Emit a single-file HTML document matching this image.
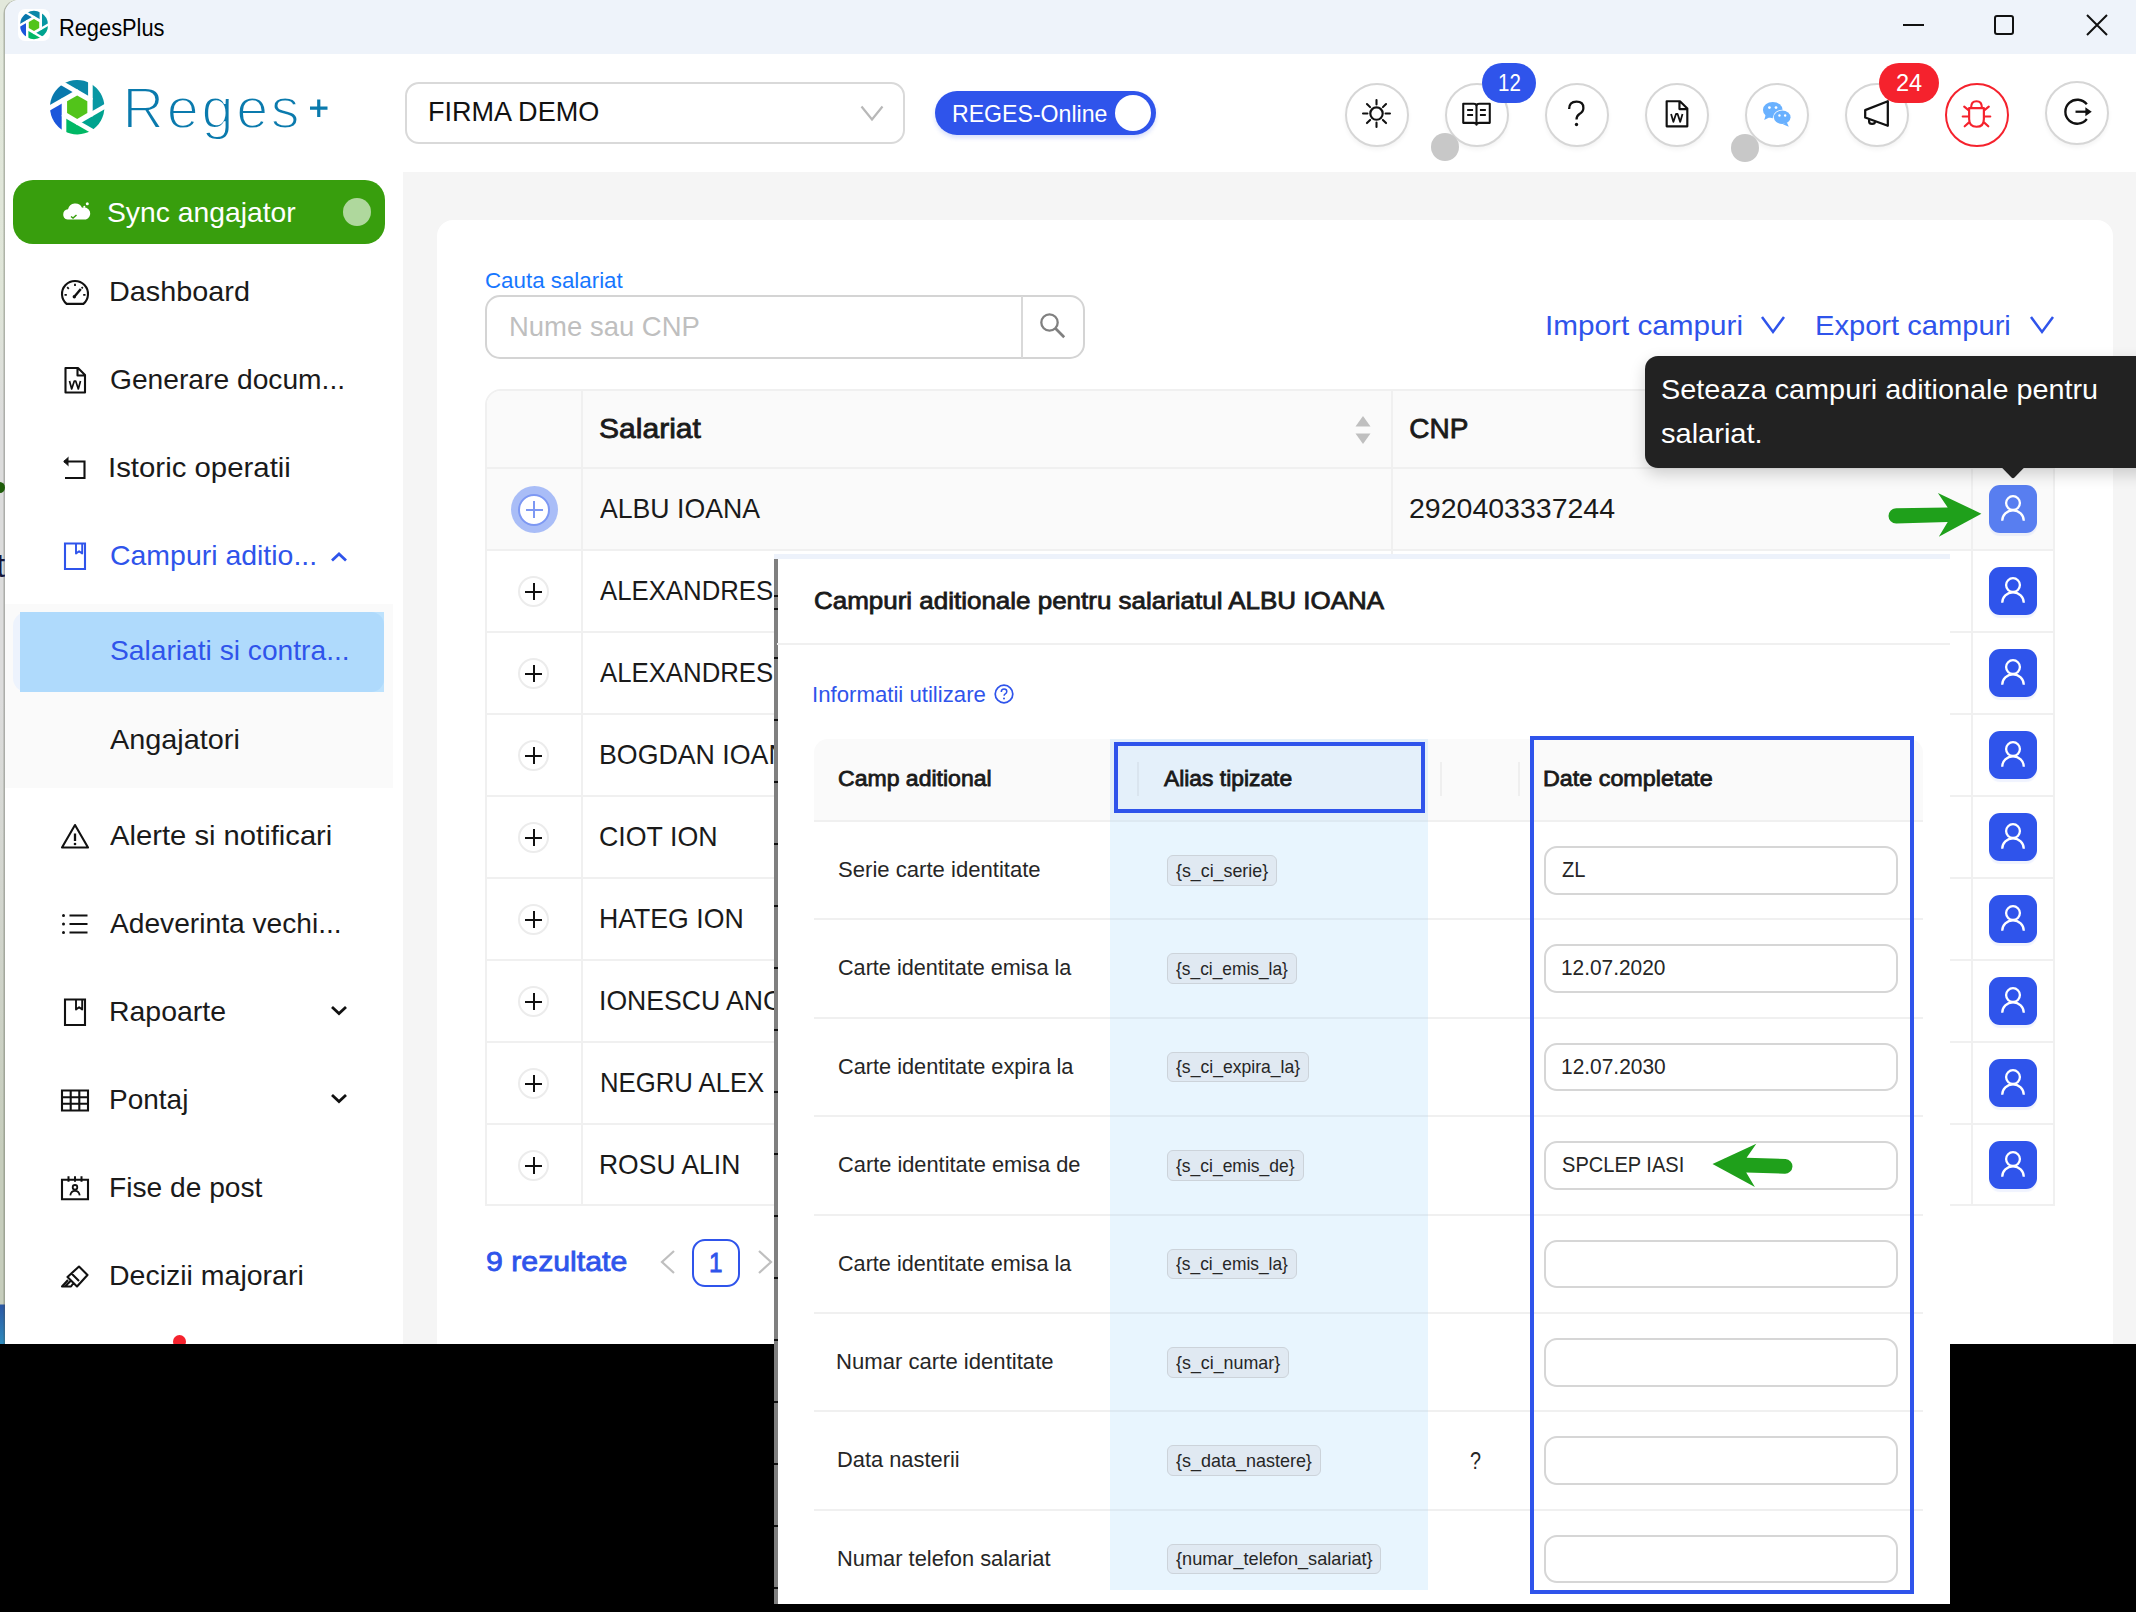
<!DOCTYPE html>
<html lang="ro">
<head>
<meta charset="utf-8">
<title>RegesPlus</title>
<style>
*{box-sizing:border-box;margin:0;padding:0}
html,body{width:2136px;height:1612px;overflow:hidden;background:#000;font-family:"Liberation Sans",sans-serif;}
.abs{position:absolute}
.t{position:absolute;white-space:nowrap;line-height:1;transform-origin:0 50%;font-family:"Liberation Sans",sans-serif}
#stage{position:absolute;left:0;top:0;width:2136px;height:1612px;overflow:hidden;background:#000}
/* desktop strip on the far left */
#strip{left:0;top:0;width:6px;height:1344px;background:linear-gradient(#e2e8db 0,#dfe5d8 300px,#dcdcdc 420px,#dcdcdc 700px,#c6cdbc 1150px,#c6cdbc 1304px,#2c58a5 1305px,#2d8bbd 1344px)}
/* app window */
#corner{left:0;top:0;width:30px;height:30px;background:#e2e8db}
#win{left:5px;top:0;width:2131px;height:1344px;background:#fff;border-top-left-radius:14px;overflow:hidden;box-shadow:-1.5px 0 0 0 rgba(70,75,65,.32)}
#titlebar{left:0;top:0;width:2131px;height:54px;background:#eef3fa}
#content{left:398px;top:172px;width:1733px;height:1172px;background:#f5f5f5}
#card{left:432px;top:220px;width:1676px;height:1200px;background:#fff;border-radius:16px}
#submenu{left:0;top:604px;width:388px;height:184px;background:#fafafa}
#selh{left:7.5px;top:612px;width:371.5px;height:80px;border-radius:14px;background:#edf3fd}
#selc{left:360px;top:612px;width:19px;height:80px;background:#bde2fd;border-radius:0}
#sel{left:15px;top:612px;width:364px;height:80px;background:#afdafc;border-radius:0 13px 13px 0}
#sync{left:8px;top:180px;width:372px;height:64px;border-radius:20px;background:#389e0d}
#syncdot{left:338px;top:198px;width:28px;height:28px;border-radius:50%;background:#afd89d}
.circ{position:absolute;width:64px;height:64px;border-radius:50%;border:2.2px solid #d6d6d6;background:#fff;box-shadow:0 3px 4px rgba(0,0,0,.045)}
.circ svg{position:absolute;left:0.3px;top:0.3px;width:59px;height:59px}
.badge{position:absolute;height:40px;border-radius:20px}
.gdot{position:absolute;width:28px;height:28px;border-radius:50%;background:#c8c8c8}
/* outer table */
#tbl{left:485px;top:389px;width:1570px;height:817px;border:2px solid #f0f0f0;border-radius:16px 16px 0 0;overflow:hidden;background:#fff}
#tbl .hr{position:absolute;left:0;width:1570px;height:2px;background:#f0f0f0}
#tbl .vr{position:absolute;top:0;width:2px;height:817px;background:#f0f0f0}
.exp{position:absolute;width:31px;height:31px;border-radius:50%;border:2px solid #ececec;background:#fff}
.exp:before{content:"";position:absolute;left:5px;top:12.5px;width:17px;height:2px;background:#111}
.exp:after{content:"";position:absolute;left:12.5px;top:5px;width:2px;height:17px;background:#111}
.pbtn{position:absolute;left:1989px;width:48px;height:48px;border-radius:11px;background:#2f54eb;box-shadow:0 3px 1px rgba(47,84,235,.07)}
.pbtn svg{position:absolute;left:0;top:0;width:48px;height:48px}
/* modal */
#modal{left:774px;top:554px;width:1176px;height:1050px;background:#fff;overflow:hidden}
#modal .in{position:absolute;left:-774px;top:-554px;width:2136px;height:1612px}
.inp{position:absolute;left:1544px;width:354px;height:48.5px;border:2px solid #d6d6d6;border-radius:13px;background:#fff}
.tag{position:absolute;left:1166.8px;height:30.5px;border:1.5px solid #ccd3da;border-radius:6px;background:#e0e9f2}
.mhr{position:absolute;left:814px;width:1109px;height:2px;background:#f0f0f0}
</style>
</head>
<body>
<div id="stage">
  <div id="strip" class="abs"></div>
  <div id="corner" class="abs"></div>
  <div id="win" class="abs">
    <div id="titlebar" class="abs"></div>
    <div id="content" class="abs"></div>
    <div id="card" class="abs"></div>
    <div id="submenu" class="abs"></div>
    <div id="selh" class="abs"></div>
    <div id="selc" class="abs"></div>
    <div id="sel" class="abs"></div>
    <div id="sync" class="abs"></div>
    <div id="syncdot" class="abs"></div>
  </div>
  <!-- everything below is positioned in absolute page coordinates -->
  <div id="base" class="abs" style="left:0;top:0;width:2136px;height:1344px;overflow:hidden">
<div class="abs" style="left:18px;top:9px;width:32px;height:32px;border-radius:7px;background:#fff"></div>
<svg class="abs" style="left:19.0px;top:9.8px;width:30.0px;height:30.0px" viewBox="-1.0714 -1.0714 2.1429 2.1429"><path d="M0.4850 -0.8745L0.4850 0.2800L0.9999 -0.0172A1 1 0 0 0 0.4850 -0.8745Z" fill="#0897a3"/><path d="M0.9999 -0.0172L0.0000 0.5600L0.5149 0.8573A1 1 0 0 0 0.9999 -0.0172Z" fill="#00a38f"/><path d="M0.5149 0.8573L-0.4850 0.2800L-0.4850 0.8745A1 1 0 0 0 0.5149 0.8573Z" fill="#00b865"/><path d="M-0.4850 0.8745L-0.4850 -0.2800L-0.9999 0.0172A1 1 0 0 0 -0.4850 0.8745Z" fill="#1b56db"/><path d="M-0.9999 0.0172L-0.0000 -0.5600L-0.5149 -0.8573A1 1 0 0 0 -0.9999 0.0172Z" fill="#0878ad"/><path d="M-0.5149 -0.8573L0.4850 -0.2800L0.4850 -0.8745A1 1 0 0 0 -0.5149 -0.8573Z" fill="#0a87a8"/><line x1="0.4850" y1="-0.9745" x2="0.4850" y2="0.3400" stroke="#fff" stroke-width="0.17"/><line x1="1.0865" y1="-0.0672" x2="-0.0520" y2="0.5900" stroke="#fff" stroke-width="0.17"/><line x1="0.6015" y1="0.9073" x2="-0.5370" y2="0.2500" stroke="#fff" stroke-width="0.17"/><line x1="-0.4850" y1="0.9745" x2="-0.4850" y2="-0.3400" stroke="#fff" stroke-width="0.17"/><line x1="-1.0865" y1="0.0672" x2="0.0520" y2="-0.5900" stroke="#fff" stroke-width="0.17"/><line x1="-0.6015" y1="-0.9073" x2="0.5370" y2="-0.2500" stroke="#fff" stroke-width="0.17"/><polygon points="0.0000,-0.4300 0.3724,-0.2150 0.3724,0.2150 0.0000,0.4300 -0.3724,0.2150 -0.3724,-0.2150" fill="#52c41a"/></svg>
<div class="abs" style="left:1903px;top:24px;width:21px;height:2px;background:#111"></div>
<div class="abs" style="left:1994px;top:15px;width:20px;height:20px;border:2px solid #111;border-radius:3px"></div>
<svg class="abs" style="left:2085px;top:13px;width:24px;height:24px" viewBox="0 0 24 24"><path d="M2 2L22 22M22 2L2 22" stroke="#111" stroke-width="2" fill="none"/></svg>
<div class="abs" style="left:-6px;top:482px;width:10.5px;height:11px;border-radius:50%;background:#1e5c0a"></div>
<div class="abs" style="left:-4px;top:549px;width:8.5px;height:34px;overflow:hidden"><span style="position:absolute;left:0;top:0;font:33px/1 'Liberation Sans';color:#16163a">t</span></div>
<svg class="abs" style="left:48.8px;top:78.9px;width:56.4px;height:56.4px" viewBox="-1.0368 -1.0368 2.0735 2.0735"><path d="M0.4850 -0.8745L0.4850 0.2800L0.9999 -0.0172A1 1 0 0 0 0.4850 -0.8745Z" fill="#0897a3"/><path d="M0.9999 -0.0172L0.0000 0.5600L0.5149 0.8573A1 1 0 0 0 0.9999 -0.0172Z" fill="#00a38f"/><path d="M0.5149 0.8573L-0.4850 0.2800L-0.4850 0.8745A1 1 0 0 0 0.5149 0.8573Z" fill="#00b865"/><path d="M-0.4850 0.8745L-0.4850 -0.2800L-0.9999 0.0172A1 1 0 0 0 -0.4850 0.8745Z" fill="#1b56db"/><path d="M-0.9999 0.0172L-0.0000 -0.5600L-0.5149 -0.8573A1 1 0 0 0 -0.9999 0.0172Z" fill="#0878ad"/><path d="M-0.5149 -0.8573L0.4850 -0.2800L0.4850 -0.8745A1 1 0 0 0 -0.5149 -0.8573Z" fill="#0a87a8"/><line x1="0.4850" y1="-0.9745" x2="0.4850" y2="0.3400" stroke="#fff" stroke-width="0.17"/><line x1="1.0865" y1="-0.0672" x2="-0.0520" y2="0.5900" stroke="#fff" stroke-width="0.17"/><line x1="0.6015" y1="0.9073" x2="-0.5370" y2="0.2500" stroke="#fff" stroke-width="0.17"/><line x1="-0.4850" y1="0.9745" x2="-0.4850" y2="-0.3400" stroke="#fff" stroke-width="0.17"/><line x1="-1.0865" y1="0.0672" x2="0.0520" y2="-0.5900" stroke="#fff" stroke-width="0.17"/><line x1="-0.6015" y1="-0.9073" x2="0.5370" y2="-0.2500" stroke="#fff" stroke-width="0.17"/><polygon points="0.0000,-0.4300 0.3724,-0.2150 0.3724,0.2150 0.0000,0.4300 -0.3724,0.2150 -0.3724,-0.2150" fill="#52c41a"/></svg>
<svg class="abs" style="left:120px;top:70px;width:220px;height:80px" viewBox="0 0 220 80"><text x="2.6" y="57.6" font-family="Liberation Sans" font-size="57.5" fill="#0a7aad" textLength="177" lengthAdjust="spacing" stroke="#fff" stroke-width="1.9">Reges</text><path d="M190 38.2H207.5M198.75 29.4V47" stroke="#0a7aad" stroke-width="3.2" fill="none"/></svg>
<div class="abs" style="left:405px;top:82px;width:500px;height:62px;border:2px solid #d9d9d9;border-radius:14px;background:#fff"></div>
<svg class="abs" style="left:858px;top:101px;width:28px;height:24px" viewBox="0 0 28 24"><path d="M3.5 5.5L14 18.5L24.5 5.5" stroke="#b8b8b8" stroke-width="2.2" fill="none"/></svg>
<div class="abs" style="left:935px;top:91px;width:221px;height:44px;border-radius:22px;background:#2f54eb;box-shadow:0 3px 4px rgba(47,84,235,.18)"></div>
<div class="abs" style="left:1115px;top:95px;width:36px;height:36px;border-radius:50%;background:#fff"></div>
<div class="circ" style="left:1345px;top:83px"><svg viewBox="0 0 60 60"><g transform="translate(0,-1)"><circle cx="30" cy="30" r="6.300" fill="none" stroke="#111" stroke-width="2.200"/><path d="M30 16.300v4.500M30 39.200v4.500M16.300 30h4.500M39.200 30h4.500M20.300 20.300l3.200 3.200M36.500 36.500l3.200 3.200M39.700 20.300l-3.200 3.200M23.500 36.500l-3.200 3.200" stroke="#111" stroke-width="2.100" fill="none" stroke-linecap="round"/></g></svg></div>
<div class="circ" style="left:1445px;top:83px"><svg viewBox="0 0 60 60"><g transform="translate(0,-1)"><path d="M16.500 20h10.500q3 0 3 2.500q0-2.500 3-2.500h10.500v19.500h-10.500q-3 0-3 2q0-2-3-2h-10.500zM30 22.500v18.500M20.500 26.500h6M20.500 31.500h6M33.500 26.500h6M33.500 31.500h6" stroke="#111" stroke-width="2.100" fill="none" stroke-linejoin="round"/></g></svg></div>
<div class="circ" style="left:1545px;top:83px"><svg viewBox="0 0 60 60"><g transform="translate(0,-1)"><path d="M22.500 25.500q0-7.500 7.500-7.500q7 0 7 6.300q0 3.800-4 6.200q-3 2-3 5.500" stroke="#111" stroke-width="2.300" fill="none"/><circle cx="30" cy="41.200" r="1.700" fill="#111"/></g></svg></div>
<div class="circ" style="left:1645px;top:83px"><svg viewBox="0 0 60 60"><g transform="translate(0,-1)"><path d="M20 17.500h13.500l7.500 7.500v18h-21zM33 18v7.500h7.500" stroke="#111" stroke-width="2.200" fill="none" stroke-linejoin="round"/><path d="M24.500 30.500l2.300 8l2.700-8h1.600l2.700 8l2.300-8" stroke="#111" stroke-width="1.800" fill="none" stroke-linejoin="round"/></g></svg></div>
<div class="circ" style="left:1745px;top:83px"><svg viewBox="0 0 60 60"><g transform="translate(0,-1)"><ellipse cx="26.200" cy="26.500" rx="10" ry="8.200" fill="#69b1ff"/><path d="M19 31.500l-1.500 5l6-3z" fill="#69b1ff"/><ellipse cx="35.800" cy="33.800" rx="9.400" ry="7.600" fill="#fff"/><ellipse cx="35.800" cy="33.800" rx="8.500" ry="6.800" fill="#69b1ff"/><path d="M40.500 39l2 4.500l-6-2.500z" fill="#69b1ff"/><circle cx="22.800" cy="24" r="1.400" fill="#fff"/><circle cx="29.500" cy="24" r="1.400" fill="#fff"/><circle cx="33" cy="32" r="1.200" fill="#fff"/><circle cx="38.800" cy="32" r="1.200" fill="#fff"/></g></svg></div>
<div class="circ" style="left:1845px;top:83px"><svg viewBox="0 0 60 60"><g transform="translate(0,-1)"><path d="M18.500 26.500l23-9v25l-23-8.500zM22.500 35.500v2.500q0 2.500 3 2.500q3 0 3-2.500v-.5" stroke="#111" stroke-width="2.300" fill="none" stroke-linejoin="round"/></g></svg></div>
<div class="circ" style="left:1945px;top:83px;border-color:#f5222d;box-shadow:none"><svg viewBox="0 0 60 60"><g transform="translate(0,-1)"><path d="M24.500 24q0-6.500 5.500-6.500q5.500 0 5.500 6.500" stroke="#f5222d" stroke-width="2.200" fill="none"/><path d="M22.500 24.500h15v11q0 8-7.500 8q-7.500 0-7.500-8zM22.500 27l-5-4M37.500 27l5-4M22.500 33h-6.500M37.500 33h6.500M23 38.500l-5 4.500M37 38.500l5 4.500" stroke="#f5222d" stroke-width="2.200" fill="none" stroke-linejoin="round" stroke-linecap="round"/></g></svg></div>
<div class="circ" style="left:2045px;top:80.6px"><svg viewBox="0 0 60 60"><g transform="translate(0,-0.8)"><path d="M40.500 22.500a12.200 12.200 0 1 0 0 15" stroke="#111" stroke-width="2.400" fill="none"/><path d="M29 30h11" stroke="#111" stroke-width="2.300" fill="none"/><path d="M39 25.500l6.500 4.500l-6.500 4.500z" fill="#111"/></g></svg></div>
<div class="gdot" style="left:1431px;top:133.2px"></div><div class="gdot" style="left:1731px;top:134.2px"></div>
<div class="badge" style="left:1482px;top:63px;width:54px;background:#2f54eb"></div>
<div class="badge" style="left:1879px;top:63px;width:60px;background:#f5222d"></div>
<svg class="abs" style="left:60px;top:198px;width:34px;height:26px" viewBox="0 0 34 26"><path d="M7.500 21.500a5.200 5.200 0 0 1 .5-10.300a7.500 7.500 0 0 1 14-1.500a6 6 0 0 1 4 11.800z" fill="#fff"/><circle cx="27.300" cy="5.800" r="1.500" fill="#fff"/><circle cx="24.300" cy="8.800" r="1" fill="#fff"/><path d="M11 18.500l2 1.500l3.500-3" stroke="#389e0d" stroke-width="1.500" fill="none"/></svg>
<svg class="abs" style="left:59px;top:275.5px;width:32px;height:32px" viewBox="0 0 32 32" fill="none" stroke="#111" stroke-width="2.1" stroke-linejoin="round"><path d="M7.6 27.9A13 13 0 1 1 24.4 27.9Z"/><path d="M15.5 20.5l6.300-7.500" stroke-width="2.4"/><circle cx="15.300" cy="20.800" r="1.700" fill="#111" stroke="none"/><path d="M16 7.800v2.300M8.200 11.200l1.600 1.600M23.800 11.200l-1.200 1.200M5.500 18.800h2.300M26.500 18.800h-2.300" stroke-width="1.800"/></svg>
<svg class="abs" style="left:59px;top:363.5px;width:32px;height:32px" viewBox="0 0 32 32" fill="none" stroke="#111" stroke-width="2.1" stroke-linejoin="round"><path d="M6.500 4h12.500l7 7v17.500h-19.500zM18.500 4.500v7h7"/><path d="M10.500 17l2.200 8l2.600-8h1.400l2.600 8l2.200-8" stroke-width="1.700"/></svg>
<svg class="abs" style="left:59px;top:451.5px;width:32px;height:32px" viewBox="0 0 32 32" fill="none" stroke="#111" stroke-width="2.1" stroke-linejoin="round"><path d="M5 9.500h20.500v16.500h-19.500" stroke-linejoin="miter"/><path d="M9.500 5.200l-4.800 4.300l4.800 4.300" fill="#111" stroke-width="1"/></svg>
<svg class="abs" style="left:59px;top:539.5px;width:32px;height:32px" viewBox="0 0 32 32" fill="none" stroke="#2f54eb" stroke-width="2.1" stroke-linejoin="round"><path d="M6 3.500h20v25.500h-20z" stroke-linejoin="miter"/><path d="M17 4v9.500l3.100-2.300l3.100 2.300v-9.500" stroke-width="1.900"/></svg>
<svg class="abs" style="left:59px;top:819.5px;width:32px;height:32px" viewBox="0 0 32 32" fill="none" stroke="#111" stroke-width="2.1" stroke-linejoin="round"><path d="M16 5l13 22.500h-26z"/><path d="M16 13.500v7.500" stroke-width="2.300"/><circle cx="16" cy="24" r="1.300" fill="#111" stroke="none"/></svg>
<svg class="abs" style="left:59px;top:907.5px;width:32px;height:32px" viewBox="0 0 32 32" fill="none" stroke="#111" stroke-width="2.1" stroke-linejoin="round"><path d="M10.500 7.500h18M10.500 16h18M10.500 24.500h18" stroke-width="2.200"/><circle cx="4.500" cy="7.500" r="1.500" fill="#111" stroke="none"/><circle cx="4.500" cy="16" r="1.500" fill="#111" stroke="none"/><circle cx="4.500" cy="24.500" r="1.500" fill="#111" stroke="none"/></svg>
<svg class="abs" style="left:59px;top:995.5px;width:32px;height:32px" viewBox="0 0 32 32" fill="none" stroke="#111" stroke-width="2.1" stroke-linejoin="round"><path d="M6 3.500h20v25.500h-20z" stroke-linejoin="miter"/><path d="M17 4v9.500l3.100-2.300l3.100 2.300v-9.500" stroke-width="1.900"/></svg>
<svg class="abs" style="left:59px;top:1083.5px;width:32px;height:32px" viewBox="0 0 32 32" fill="none" stroke="#111" stroke-width="2.1" stroke-linejoin="round"><path d="M3 6.500h26v20h-26zM3 13.200h26M3 19.800h26M11.700 6.500v20M20.300 6.500v20" stroke-linejoin="miter"/></svg>
<svg class="abs" style="left:59px;top:1171.5px;width:32px;height:32px" viewBox="0 0 32 32" fill="none" stroke="#111" stroke-width="2.1" stroke-linejoin="round"><path d="M3 7.800h26v19.500h-26z" stroke-linejoin="miter"/><path d="M9.500 4.300v5.500M16 4.300v5.500M22.500 4.300v5.500" stroke-width="2"/><circle cx="16" cy="15.300" r="2.300" stroke-width="1.800"/><path d="M11.300 23.300q.7-4.500 4.700-4.500q4 0 4.700 4.500" stroke-width="1.800"/></svg>
<svg class="abs" style="left:59px;top:1259.5px;width:32px;height:32px" viewBox="0 0 32 32" fill="none" stroke="#111" stroke-width="2.1" stroke-linejoin="round"><path d="M12 20.500l-3.500-3.500l11.500-10.500l8.500 8.500l-10.500 11.500l-3.500-3.500zM12 20.500l-5.500 5.500M14.500 23l-2.500 3.500h-9l6-6.500M12.500 13.500l7.500 7.500"/></svg>
<svg class="abs" style="left:330px;top:550.5px;width:18px;height:13px" viewBox="0 0 18 13"><path d="M2 9.500L9 3L16 9.500" stroke="#2f54eb" stroke-width="2.800" fill="none"/></svg>
<svg class="abs" style="left:330px;top:1003.5px;width:18px;height:13px" viewBox="0 0 18 13"><path d="M2 3L9 9.500L16 3" stroke="#111" stroke-width="2.800" fill="none"/></svg>
<svg class="abs" style="left:330px;top:1091.5px;width:18px;height:13px" viewBox="0 0 18 13"><path d="M2 3L9 9.500L16 3" stroke="#111" stroke-width="2.800" fill="none"/></svg>
<div class="abs" style="left:173px;top:1335px;width:13px;height:13px;border-radius:50%;background:#f5222d"></div>
<div class="abs" style="left:485px;top:295px;width:600px;height:64px;border:2px solid #d4d4d4;border-radius:15px;background:#fff"></div>
<div class="abs" style="left:1021px;top:296px;width:2px;height:62px;background:#d9d9d9"></div>
<svg class="abs" style="left:1036.2px;top:309.2px;width:32px;height:32px" viewBox="0 0 32 32"><circle cx="13.500" cy="13.500" r="8.200" stroke="#808080" stroke-width="2.300" fill="none"/><path d="M19.300 19.300L28.200 28.200" stroke="#808080" stroke-width="2.700"/></svg>
<svg class="abs" style="left:1760px;top:314px;width:26px;height:22px" viewBox="0 0 26 22"><path d="M2 3L13 18L24 3" stroke="#2f54eb" stroke-width="2.500" fill="none"/></svg>
<svg class="abs" style="left:2028.5px;top:314px;width:26px;height:22px" viewBox="0 0 26 22"><path d="M2 3L13 18L24 3" stroke="#2f54eb" stroke-width="2.500" fill="none"/></svg>
<div id="tbl" class="abs"><div class="abs" style="left:0;top:0;width:1570px;height:78px;background:#fafafa"></div><div class="abs" style="left:0;top:78px;width:1570px;height:82px;background:#fafafa"></div><div class="hr" style="top:76px"></div><div class="hr" style="top:158px"></div><div class="hr" style="top:240px"></div><div class="hr" style="top:322px"></div><div class="hr" style="top:404px"></div><div class="hr" style="top:486px"></div><div class="hr" style="top:568px"></div><div class="hr" style="top:650px"></div><div class="hr" style="top:732px"></div><div class="hr" style="top:814px"></div><div class="vr" style="left:94px"></div><div class="vr" style="left:904px"></div><div class="vr" style="left:1484px"></div></div>
<svg class="abs" style="left:1354px;top:414px;width:18px;height:32px" viewBox="0 0 18 32"><path d="M9 2L16.500 12.500H1.500Z" fill="#bfbfbf"/><path d="M9 30L16.500 19.500H1.500Z" fill="#bfbfbf"/></svg>
<div class="abs" style="left:510.500px;top:486.3px;width:47px;height:47px;border-radius:50%;background:#a9bdf7"></div>
<div class="abs" style="left:518px;top:493.8px;width:32px;height:32px;border-radius:50%;background:#fff;border:2px solid #7d98f3"></div>
<div class="abs" style="left:525.500px;top:508.8px;width:17px;height:2px;background:#7d98f3"></div><div class="abs" style="left:533px;top:501.3px;width:2px;height:17px;background:#7d98f3"></div>
<div class="pbtn" style="top:485px;background:#587ef0"><svg viewBox="0 0 48 48"><circle cx="24" cy="18.100" r="6.900" stroke="#fff" stroke-width="2.300" fill="none"/><path d="M13.200 35.800A10.700 10.400 0 0 1 34.800 35.800" stroke="#fff" stroke-width="2.300" fill="none"/></svg></div>
<div class="exp" style="left:518.300px;top:576.3px"></div>
<div class="pbtn" style="top:567px"><svg viewBox="0 0 48 48"><circle cx="24" cy="18.100" r="6.900" stroke="#fff" stroke-width="2.300" fill="none"/><path d="M13.200 35.800A10.700 10.400 0 0 1 34.800 35.800" stroke="#fff" stroke-width="2.300" fill="none"/></svg></div>
<div class="exp" style="left:518.300px;top:658.3px"></div>
<div class="pbtn" style="top:649px"><svg viewBox="0 0 48 48"><circle cx="24" cy="18.100" r="6.900" stroke="#fff" stroke-width="2.300" fill="none"/><path d="M13.200 35.800A10.700 10.400 0 0 1 34.800 35.800" stroke="#fff" stroke-width="2.300" fill="none"/></svg></div>
<div class="exp" style="left:518.300px;top:740.3px"></div>
<div class="pbtn" style="top:731px"><svg viewBox="0 0 48 48"><circle cx="24" cy="18.100" r="6.900" stroke="#fff" stroke-width="2.300" fill="none"/><path d="M13.200 35.800A10.700 10.400 0 0 1 34.800 35.800" stroke="#fff" stroke-width="2.300" fill="none"/></svg></div>
<div class="exp" style="left:518.300px;top:822.3px"></div>
<div class="pbtn" style="top:813px"><svg viewBox="0 0 48 48"><circle cx="24" cy="18.100" r="6.900" stroke="#fff" stroke-width="2.300" fill="none"/><path d="M13.200 35.800A10.700 10.400 0 0 1 34.800 35.800" stroke="#fff" stroke-width="2.300" fill="none"/></svg></div>
<div class="exp" style="left:518.300px;top:904.3px"></div>
<div class="pbtn" style="top:895px"><svg viewBox="0 0 48 48"><circle cx="24" cy="18.100" r="6.900" stroke="#fff" stroke-width="2.300" fill="none"/><path d="M13.200 35.800A10.700 10.400 0 0 1 34.800 35.800" stroke="#fff" stroke-width="2.300" fill="none"/></svg></div>
<div class="exp" style="left:518.300px;top:986.3px"></div>
<div class="pbtn" style="top:977px"><svg viewBox="0 0 48 48"><circle cx="24" cy="18.100" r="6.900" stroke="#fff" stroke-width="2.300" fill="none"/><path d="M13.200 35.800A10.700 10.400 0 0 1 34.800 35.800" stroke="#fff" stroke-width="2.300" fill="none"/></svg></div>
<div class="exp" style="left:518.300px;top:1068.3px"></div>
<div class="pbtn" style="top:1059px"><svg viewBox="0 0 48 48"><circle cx="24" cy="18.100" r="6.900" stroke="#fff" stroke-width="2.300" fill="none"/><path d="M13.200 35.800A10.700 10.400 0 0 1 34.800 35.800" stroke="#fff" stroke-width="2.300" fill="none"/></svg></div>
<div class="exp" style="left:518.300px;top:1150.3px"></div>
<div class="pbtn" style="top:1141px"><svg viewBox="0 0 48 48"><circle cx="24" cy="18.100" r="6.900" stroke="#fff" stroke-width="2.300" fill="none"/><path d="M13.200 35.800A10.700 10.400 0 0 1 34.800 35.800" stroke="#fff" stroke-width="2.300" fill="none"/></svg></div>
<div class="abs" style="left:692px;top:1239px;width:48px;height:48px;border:2px solid #2f54eb;border-radius:13px;background:#fff"></div>
<svg class="abs" style="left:658px;top:1248px;width:20px;height:28px" viewBox="0 0 20 28"><path d="M16 3L4 14L16 25" stroke="#bfbfbf" stroke-width="2.200" fill="none"/></svg>
<svg class="abs" style="left:755px;top:1248px;width:20px;height:28px" viewBox="0 0 20 28"><path d="M4 3L16 14L4 25" stroke="#bfbfbf" stroke-width="2.200" fill="none"/></svg>
<span class="t" style="left:59.0px;top:17px;font-size:23.5px;color:#000;font-weight:normal;transform:scaleX(0.9279);">RegesPlus</span>
<span class="t" style="left:107.0px;top:199px;font-size:28px;color:#fff;font-weight:normal;transform:scaleX(1.0102);">Sync angajator</span>
<span class="t" style="left:109.0px;top:278px;font-size:28px;color:#1a1a1a;font-weight:normal;transform:scaleX(1.0286);">Dashboard</span>
<span class="t" style="left:109.8px;top:366px;font-size:28px;color:#1a1a1a;font-weight:normal;transform:scaleX(1.0070);">Generare docum...</span>
<span class="t" style="left:108.4px;top:454px;font-size:28px;color:#1a1a1a;font-weight:normal;transform:scaleX(1.0494);">Istoric operatii</span>
<span class="t" style="left:109.8px;top:542px;font-size:28px;color:#2f54eb;font-weight:normal;transform:scaleX(1.0160);">Campuri aditio...</span>
<span class="t" style="left:109.8px;top:637px;font-size:28px;color:#2f54eb;font-weight:normal;transform:scaleX(1.0064);">Salariati si contra...</span>
<span class="t" style="left:110.3px;top:726px;font-size:28px;color:#1a1a1a;font-weight:normal;transform:scaleX(1.0298);">Angajatori</span>
<span class="t" style="left:110.3px;top:822px;font-size:28px;color:#1a1a1a;font-weight:normal;transform:scaleX(1.0429);">Alerte si notificari</span>
<span class="t" style="left:110.3px;top:910px;font-size:28px;color:#1a1a1a;font-weight:normal;transform:scaleX(1.0057);">Adeverinta vechi...</span>
<span class="t" style="left:109.1px;top:998px;font-size:28px;color:#1a1a1a;font-weight:normal;transform:scaleX(1.0161);">Rapoarte</span>
<span class="t" style="left:109.0px;top:1086px;font-size:28px;color:#1a1a1a;font-weight:normal;">Pontaj</span>
<span class="t" style="left:109.0px;top:1174px;font-size:28px;color:#1a1a1a;font-weight:normal;transform:scaleX(1.0060);">Fise de post</span>
<span class="t" style="left:109.0px;top:1262px;font-size:28px;color:#1a1a1a;font-weight:normal;transform:scaleX(1.0176);">Decizii majorari</span>
<span class="t" style="left:427.8px;top:98px;font-size:27.5px;color:#111;font-weight:normal;transform:scaleX(0.9830);">FIRMA DEMO</span>
<span class="t" style="left:952.2px;top:102px;font-size:24.5px;color:#fff;font-weight:normal;transform:scaleX(0.9432);">REGES-Online</span>
<span class="t" style="left:1497.6px;top:71px;font-size:23.8px;color:#fff;font-weight:normal;transform:scaleX(0.8609);">12</span>
<span class="t" style="left:1896.0px;top:71px;font-size:23.8px;color:#fff;font-weight:normal;transform:scaleX(0.9880);">24</span>
<span class="t" style="left:485.0px;top:270px;font-size:22.5px;color:#1677ff;font-weight:normal;transform:scaleX(0.9920);">Cauta salariat</span>
<span class="t" style="left:508.5px;top:313px;font-size:28px;color:#bfbfbf;font-weight:normal;transform:scaleX(0.9812);">Nume sau CNP</span>
<span class="t" style="left:1544.9px;top:312px;font-size:28px;color:#2f54eb;font-weight:normal;transform:scaleX(1.0610);">Import campuri</span>
<span class="t" style="left:1815.4px;top:312px;font-size:28px;color:#2f54eb;font-weight:normal;transform:scaleX(1.0400);">Export campuri</span>
<span class="t" style="left:599.2px;top:415px;font-size:28px;color:#1a1a1a;font-weight:normal;-webkit-text-stroke:0.8px currentColor;transform:scaleX(1.0734);">Salariat</span>
<span class="t" style="left:1409.3px;top:415px;font-size:28px;color:#1a1a1a;font-weight:normal;-webkit-text-stroke:0.8px currentColor;">CNP</span>
<span class="t" style="left:600.0px;top:494px;font-size:28.5px;color:#1a1a1a;font-weight:normal;transform:scaleX(0.9351);">ALBU IOANA</span>
<span class="t" style="left:599.9px;top:576px;font-size:28.5px;color:#1a1a1a;font-weight:normal;transform:scaleX(0.9037);">ALEXANDRES</span>
<span class="t" style="left:599.9px;top:658px;font-size:28.5px;color:#1a1a1a;font-weight:normal;transform:scaleX(0.9037);">ALEXANDRES</span>
<span class="t" style="left:599.4px;top:740px;font-size:28.5px;color:#1a1a1a;font-weight:normal;transform:scaleX(0.9382);">BOGDAN IOANA</span>
<span class="t" style="left:599.4px;top:822px;font-size:28.5px;color:#1a1a1a;font-weight:normal;transform:scaleX(0.9398);">CIOT ION</span>
<span class="t" style="left:598.9px;top:904px;font-size:28.5px;color:#1a1a1a;font-weight:normal;transform:scaleX(0.9353);">HATEG ION</span>
<span class="t" style="left:598.5px;top:986px;font-size:28.5px;color:#1a1a1a;font-weight:normal;transform:scaleX(0.9327);">IONESCU ANCA</span>
<span class="t" style="left:599.5px;top:1068px;font-size:28.5px;color:#1a1a1a;font-weight:normal;transform:scaleX(0.9017);">NEGRU ALEX</span>
<span class="t" style="left:598.9px;top:1150px;font-size:28.5px;color:#1a1a1a;font-weight:normal;transform:scaleX(0.9291);">ROSU ALIN</span>
<span class="t" style="left:1409.0px;top:494px;font-size:28.5px;color:#1a1a1a;font-weight:normal;">2920403337244</span>
<span class="t" style="left:485.7px;top:1248px;font-size:28px;color:#2f54eb;font-weight:normal;-webkit-text-stroke:0.8px currentColor;transform:scaleX(1.0806);">9 rezultate</span>
<span class="t" style="left:708.6px;top:1249px;font-size:28px;color:#2f54eb;font-weight:normal;-webkit-text-stroke:0.8px currentColor;transform:scaleX(0.8667);">1</span>
  </div>
  <div id="modal" class="abs"><div class="in">
<div class="abs" style="left:774px;top:554px;width:1176px;height:5px;background:#edf2fb"></div>
<div class="abs" style="left:774px;top:559px;width:3.500px;height:1053px;background:#7f7f7f"></div>
<div class="abs" style="left:777px;top:643px;width:1173px;height:2px;background:#f0f0f0"></div>
<svg class="abs" style="left:993px;top:683px;width:22px;height:22px" viewBox="0 0 22 22"><circle cx="11" cy="11" r="8.800" stroke="#2f54eb" stroke-width="1.700" fill="none"/><path d="M8.300 9q0-3 2.800-3q2.700 0 2.700 2.500q0 1.500-1.500 2.300q-1.200.7-1.200 2" stroke="#2f54eb" stroke-width="1.500" fill="none"/><circle cx="11" cy="15.600" r="1" fill="#2f54eb"/></svg>
<div class="abs" style="left:774px;top:608.0px;width:3.5px;height:2px;background:#111"></div>
<div class="abs" style="left:774px;top:594.6px;width:3.5px;height:2px;background:#111"></div>
<div class="abs" style="left:774px;top:656.6px;width:3.5px;height:2px;background:#111"></div>
<div class="abs" style="left:774px;top:718.6px;width:3.5px;height:2px;background:#111"></div>
<div class="abs" style="left:774px;top:780.6px;width:3.5px;height:2px;background:#111"></div>
<div class="abs" style="left:774px;top:842.6px;width:3.5px;height:2px;background:#111"></div>
<div class="abs" style="left:774px;top:904.6px;width:3.5px;height:2px;background:#111"></div>
<div class="abs" style="left:774px;top:966.6px;width:3.5px;height:2px;background:#111"></div>
<div class="abs" style="left:774px;top:1028.6px;width:3.5px;height:2px;background:#111"></div>
<div class="abs" style="left:774px;top:1090.6px;width:3.5px;height:2px;background:#111"></div>
<div class="abs" style="left:774px;top:1152.6px;width:3.5px;height:2px;background:#111"></div>
<div class="abs" style="left:774px;top:1214.6px;width:3.5px;height:2px;background:#111"></div>
<div class="abs" style="left:774px;top:1276.6px;width:3.5px;height:2px;background:#111"></div>
<div class="abs" style="left:774px;top:1338.6px;width:3.5px;height:2px;background:#111"></div>
<div class="abs" style="left:774px;top:1400.6px;width:3.5px;height:2px;background:#111"></div>
<div class="abs" style="left:774px;top:1462.6px;width:3.5px;height:2px;background:#111"></div>
<div class="abs" style="left:774px;top:1524.6px;width:3.5px;height:2px;background:#111"></div>
<div class="abs" style="left:774px;top:1586.6px;width:3.5px;height:2px;background:#111"></div>
<div class="abs" style="left:814px;top:739px;width:1109px;height:82px;background:#fafafa;border-radius:14px 14px 0 0"></div>
<div class="abs" style="left:1110.4px;top:739px;width:317.4px;height:82px;background:#e4f0fa"></div>
<div class="abs" style="left:1110.4px;top:821px;width:317.4px;height:769px;background:#e8f5fe"></div>
<div class="abs" style="left:1137px;top:762px;width:2px;height:34px;background:rgba(0,0,0,.045)"></div>
<div class="abs" style="left:1440px;top:762px;width:2px;height:34px;background:rgba(0,0,0,.045)"></div>
<div class="abs" style="left:1518px;top:762px;width:2px;height:34px;background:rgba(0,0,0,.045)"></div>
<div class="mhr" style="top:820.0px"></div>
<div class="abs" style="left:1110px;top:820.0px;width:318px;height:2px;background:#dde9f2"></div>
<div class="mhr" style="top:918.4px"></div>
<div class="abs" style="left:1110px;top:918.4px;width:318px;height:2px;background:#dde9f2"></div>
<div class="mhr" style="top:1016.8px"></div>
<div class="abs" style="left:1110px;top:1016.8px;width:318px;height:2px;background:#dde9f2"></div>
<div class="mhr" style="top:1115.2px"></div>
<div class="abs" style="left:1110px;top:1115.2px;width:318px;height:2px;background:#dde9f2"></div>
<div class="mhr" style="top:1213.6px"></div>
<div class="abs" style="left:1110px;top:1213.6px;width:318px;height:2px;background:#dde9f2"></div>
<div class="mhr" style="top:1312.0px"></div>
<div class="abs" style="left:1110px;top:1312.0px;width:318px;height:2px;background:#dde9f2"></div>
<div class="mhr" style="top:1410.4px"></div>
<div class="abs" style="left:1110px;top:1410.4px;width:318px;height:2px;background:#dde9f2"></div>
<div class="mhr" style="top:1508.8px"></div>
<div class="abs" style="left:1110px;top:1508.8px;width:318px;height:2px;background:#dde9f2"></div>
<div class="mhr" style="top:1607.2px"></div>
<div class="abs" style="left:1110px;top:1607.2px;width:318px;height:2px;background:#dde9f2"></div>
<div class="tag" style="top:855.0px;width:110px"></div>
<div class="inp" style="top:846.0px"></div>
<div class="tag" style="top:953.4px;width:130.5px"></div>
<div class="inp" style="top:944.4px"></div>
<div class="tag" style="top:1051.8px;width:142.5px"></div>
<div class="inp" style="top:1042.8px"></div>
<div class="tag" style="top:1150.2px;width:137px"></div>
<div class="inp" style="top:1141.2px"></div>
<div class="tag" style="top:1248.6px;width:130.5px"></div>
<div class="inp" style="top:1239.5px"></div>
<div class="tag" style="top:1347.0px;width:122px"></div>
<div class="inp" style="top:1338.0px"></div>
<div class="tag" style="top:1445.4px;width:154px"></div>
<div class="inp" style="top:1436.4px"></div>
<div class="tag" style="top:1543.8px;width:214.5px"></div>
<div class="inp" style="top:1534.8px"></div>
<div class="abs" style="left:1114px;top:742px;width:311px;height:71px;border:4.500px solid #2f54eb"></div>
<div class="abs" style="left:1530px;top:736px;width:384px;height:858px;border:4.500px solid #2f54eb"></div>
<svg class="abs" style="left:1705px;top:1138px;width:96px;height:56px" viewBox="0 0 96 56"><path d="M7.5 25.9L51.3 5.7L41.6 19.8L80.5 20.9A7.4 7.4 0 0 1 79.6 35.7L41.2 34.6L49.9 49Z" fill="#1fa01b"/></svg>
<span class="t" style="left:813.5px;top:589px;font-size:24px;color:#1a1a1a;font-weight:normal;-webkit-text-stroke:0.8px currentColor;transform:scaleX(1.0819);">Campuri aditionale pentru salariatul ALBU IOANA</span>
<span class="t" style="left:812.3px;top:684px;font-size:22.5px;color:#2f54eb;font-weight:normal;transform:scaleX(0.9861);">Informatii utilizare</span>
<span class="t" style="left:837.7px;top:768px;font-size:22px;color:#1a1a1a;font-weight:normal;-webkit-text-stroke:0.8px currentColor;transform:scaleX(1.0472);">Camp aditional</span>
<span class="t" style="left:1164.4px;top:768px;font-size:22px;color:#1a1a1a;font-weight:normal;-webkit-text-stroke:0.8px currentColor;transform:scaleX(1.0374);">Alias tipizate</span>
<span class="t" style="left:1542.7px;top:768px;font-size:22px;color:#1a1a1a;font-weight:normal;-webkit-text-stroke:0.8px currentColor;transform:scaleX(1.0599);">Date completate</span>
<span class="t" style="left:837.5px;top:860px;font-size:21.5px;color:#262626;font-weight:normal;transform:scaleX(1.0277);">Serie carte identitate</span>
<span class="t" style="left:837.5px;top:958px;font-size:21.5px;color:#262626;font-weight:normal;transform:scaleX(1.0061);">Carte identitate emisa la</span>
<span class="t" style="left:837.5px;top:1057px;font-size:21.5px;color:#262626;font-weight:normal;transform:scaleX(1.0103);">Carte identitate expira la</span>
<span class="t" style="left:837.5px;top:1155px;font-size:21.5px;color:#262626;font-weight:normal;transform:scaleX(1.0143);">Carte identitate emisa de</span>
<span class="t" style="left:837.5px;top:1254px;font-size:21.5px;color:#262626;font-weight:normal;transform:scaleX(1.0061);">Carte identitate emisa la</span>
<span class="t" style="left:836.4px;top:1352px;font-size:21.5px;color:#262626;font-weight:normal;transform:scaleX(1.0287);">Numar carte identitate</span>
<span class="t" style="left:836.5px;top:1450px;font-size:21.5px;color:#262626;font-weight:normal;transform:scaleX(1.0161);">Data nasterii</span>
<span class="t" style="left:836.5px;top:1549px;font-size:21.5px;color:#262626;font-weight:normal;transform:scaleX(1.0154);">Numar telefon salariat</span>
<span class="t" style="left:1176.1px;top:862px;font-size:18.4px;color:#262626;font-weight:normal;transform:scaleX(0.9684);">{s_ci_serie}</span>
<span class="t" style="left:1176.1px;top:960px;font-size:18.4px;color:#262626;font-weight:normal;transform:scaleX(0.9437);">{s_ci_emis_la}</span>
<span class="t" style="left:1176.1px;top:1058px;font-size:18.4px;color:#262626;font-weight:normal;transform:scaleX(0.9562);">{s_ci_expira_la}</span>
<span class="t" style="left:1176.1px;top:1157px;font-size:18.4px;color:#262626;font-weight:normal;transform:scaleX(0.9504);">{s_ci_emis_de}</span>
<span class="t" style="left:1176.1px;top:1255px;font-size:18.4px;color:#262626;font-weight:normal;transform:scaleX(0.9437);">{s_ci_emis_la}</span>
<span class="t" style="left:1176.1px;top:1354px;font-size:18.4px;color:#262626;font-weight:normal;transform:scaleX(0.9701);">{s_ci_numar}</span>
<span class="t" style="left:1176.1px;top:1452px;font-size:18.4px;color:#262626;font-weight:normal;transform:scaleX(0.9770);">{s_data_nastere}</span>
<span class="t" style="left:1176.1px;top:1550px;font-size:18.4px;color:#262626;font-weight:normal;transform:scaleX(0.9864);">{numar_telefon_salariat}</span>
<span class="t" style="left:1561.6px;top:860px;font-size:21.5px;color:#262626;font-weight:normal;transform:scaleX(0.9333);">ZL</span>
<span class="t" style="left:1560.9px;top:958px;font-size:21.5px;color:#262626;font-weight:normal;transform:scaleX(0.9705);">12.07.2020</span>
<span class="t" style="left:1560.9px;top:1057px;font-size:21.5px;color:#262626;font-weight:normal;transform:scaleX(0.9724);">12.07.2030</span>
<span class="t" style="left:1561.6px;top:1155px;font-size:21.5px;color:#262626;font-weight:normal;transform:scaleX(0.9328);">SPCLEP IASI</span>
<span class="t" style="left:1470.2px;top:1449px;font-size:24px;color:#262626;font-weight:normal;transform:scaleX(0.8250);">?</span>
  </div></div>
  <div id="top" class="abs" style="left:0;top:0;width:2136px;height:1612px;overflow:hidden;pointer-events:none">
<div class="abs" style="left:1645px;top:356px;width:520px;height:112px;border-radius:13px;background:#222;box-shadow:0 6px 16px rgba(0,0,0,.18)"></div>
<svg class="abs" style="left:1996.8px;top:467.2px;width:32px;height:13px" viewBox="0 0 32 13"><path d="M4.3 0H27.700L17.500 10.400q-1.500 1.500-3 0Z" fill="#222"/></svg>
<svg class="abs" style="left:1882px;top:486px;width:106px;height:58px" viewBox="0 0 106 58"><path d="M14.2 22.2L65.7 21.5L55.9 6.9L99.4 27.7L56.8 50.7L65.7 36L14.2 37.6A7.7 7.7 0 0 1 14.2 22.2Z" fill="#1fa01b"/></svg>
<span class="t" style="left:1660.8px;top:376px;font-size:28px;color:#fff;font-weight:normal;transform:scaleX(1.0287);">Seteaza campuri aditionale pentru</span>
<span class="t" style="left:1660.8px;top:420px;font-size:28px;color:#fff;font-weight:normal;transform:scaleX(1.0368);">salariat.</span>
  </div>
</div>
</body>
</html>
